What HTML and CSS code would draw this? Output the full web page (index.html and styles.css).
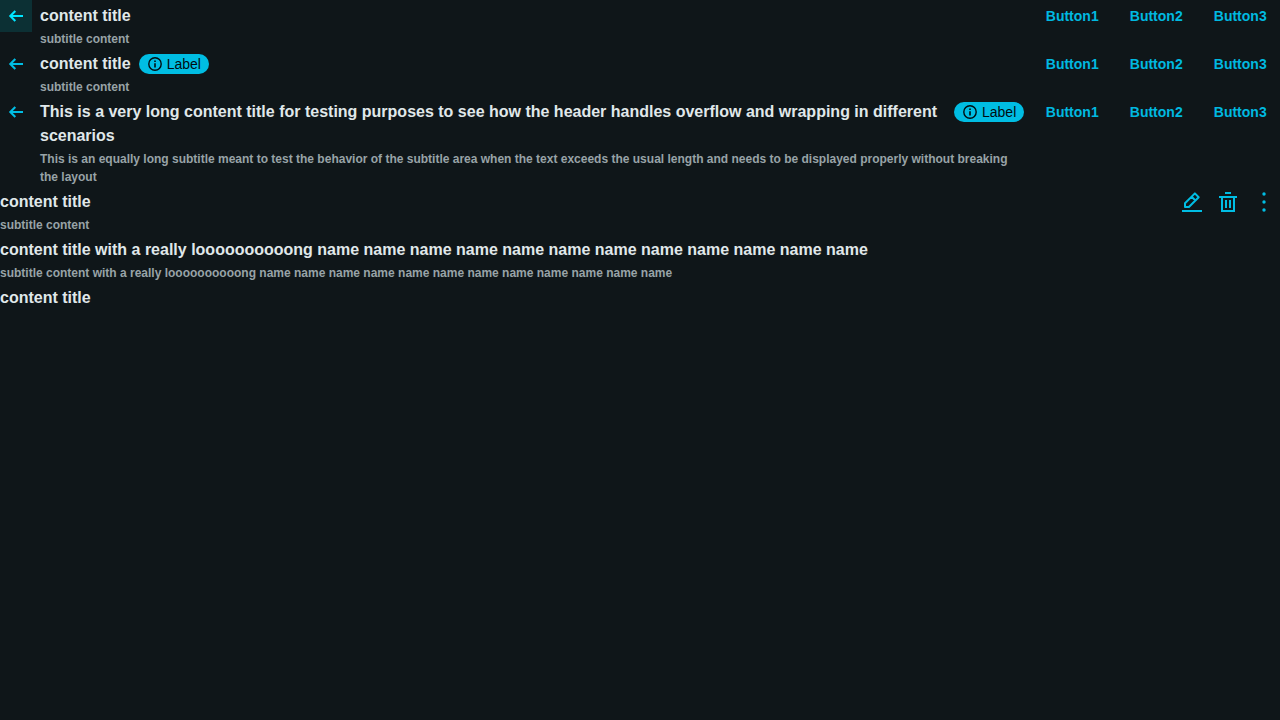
FILE: index.html
```html
<!DOCTYPE html>
<html lang="en">
<head>
<meta charset="utf-8">
<title>Content headers</title>
<link rel="stylesheet" href="styles.css">
</head>
<body>
<svg class="defs" width="0" height="0">
<symbol id="back" viewBox="0 0 16 16"><path d="M15 8H2.4M7.300 2.900L2.300 8l5 5.100" fill="none" stroke="currentColor" stroke-width="2.100"/></symbol>
<symbol id="info" viewBox="0 0 16 16"><circle cx="8" cy="8" r="6.2" fill="none" stroke="currentColor" stroke-width="1.4"/><path d="M7.2 4.5h1.6v1.6H7.2zM7.2 7.2h1.6v4.200H7.2z"/></symbol>
</svg>
<header class="header">
<button class="back active"><svg><use href="#back"/></svg></button>
<div class="text"><div class="title-row"><h1 class="title">content title</h1></div><p class="subtitle">subtitle content</p></div>
<div class="actions"><button class="button">Button1</button><button class="button">Button2</button><button class="button">Button3</button></div>
</header>
<header class="header">
<button class="back"><svg><use href="#back"/></svg></button>
<div class="text"><div class="title-row"><h1 class="title">content title</h1><span class="pill"><svg><use href="#info"/></svg>Label</span></div><p class="subtitle">subtitle content</p></div>
<div class="actions"><button class="button">Button1</button><button class="button">Button2</button><button class="button">Button3</button></div>
</header>
<header class="header">
<button class="back"><svg><use href="#back"/></svg></button>
<div class="text"><div class="title-row"><h1 class="title">This is a very long content title for testing purposes to see how the header handles overflow and wrapping in different scenarios</h1><span class="pill"><svg><use href="#info"/></svg>Label</span></div><p class="subtitle">This is an equally long subtitle meant to test the behavior of the subtitle area when the text exceeds the usual length and needs to be displayed properly without breaking the layout</p></div>
<div class="actions"><button class="button">Button1</button><button class="button">Button2</button><button class="button">Button3</button></div>
</header>
<header class="header">
<div class="text"><h1 class="title">content title</h1><p class="subtitle">subtitle content</p></div>
<div class="actions icons">
<button class="icon"><svg viewBox="0 0 24 24"><path d="M2 20h20v2H2z"/><path d="M5 17v-3.800L14.900 3.400L18.700 7.200L8.900 17zM11.600 6.700l3.800 3.800" fill="none" stroke="currentColor" stroke-width="2" stroke-linejoin="round"/></svg></button>
<button class="icon"><svg viewBox="0 0 24 24"><path d="M9 2h6v2H9zM3 6h18v2H3zM9 10h2v8H9zM13 10h2v8h-2z"/><path d="M6 7v14h12V7" fill="none" stroke="currentColor" stroke-width="2"/></svg></button>
<button class="icon"><svg viewBox="0 0 24 24"><circle cx="12" cy="4" r="1.7"/><circle cx="12" cy="12" r="1.7"/><circle cx="12" cy="20" r="1.7"/></svg></button>
</div>
</header>
<header class="header"><div class="text"><h1 class="title">content title with a really loooooooooong name name name name name name name name name name name name</h1><p class="subtitle">subtitle content with a really loooooooooong name name name name name name name name name name name name</p></div></header>
<header class="header"><div class="text"><h1 class="title">content title</h1></div></header>
</body>
</html>
```
FILE: styles.css
```css
body { margin: 0; background: #0f1619; color: #e0e8ea; font-family: "Liberation Sans", Arial, sans-serif; }
.defs { position: absolute; }
svg { fill: currentColor; display: block; }
button { border: 0; margin: 0; background: transparent; color: #00bde3; font-family: inherit; }
.header { display: flex; align-items: flex-start; }
.back { width: 32px; height: 32px; padding: 8px; margin-right: 8px; flex: none; }
.back svg { width: 16px; height: 16px; }
.back.active { background: #0c3034; color: #00e5ff; }
.text { flex: 1; min-width: 0; padding-top: 4px; }
.title-row { display: flex; align-items: flex-start; }
.title { margin: 0; font-size: 16px; line-height: 24px; font-weight: 700; }
.subtitle { margin: 2px 0 0; font-size: 12px; line-height: 18px; font-weight: 700; color: #98a3a7; }
.pill { display: flex; align-items: center; flex: none; box-sizing: border-box; width: 70px; height: 20px; margin: 2px 0 0 8px; padding-left: 8px; gap: 4px; border-radius: 10px; background: #00bde3; color: #000c10; font-size: 14px; }
.pill svg { width: 16px; height: 16px; }
.actions { display: flex; flex: none; gap: 4px; margin-left: 8px; }
.button { width: 80px; height: 32px; padding: 0 0 0 0.5px; font-size: 14px; font-weight: 700; color: #00b9e0; }
.icon { width: 32px; height: 32px; padding: 4px; }
.icon svg { width: 24px; height: 24px; }
```
